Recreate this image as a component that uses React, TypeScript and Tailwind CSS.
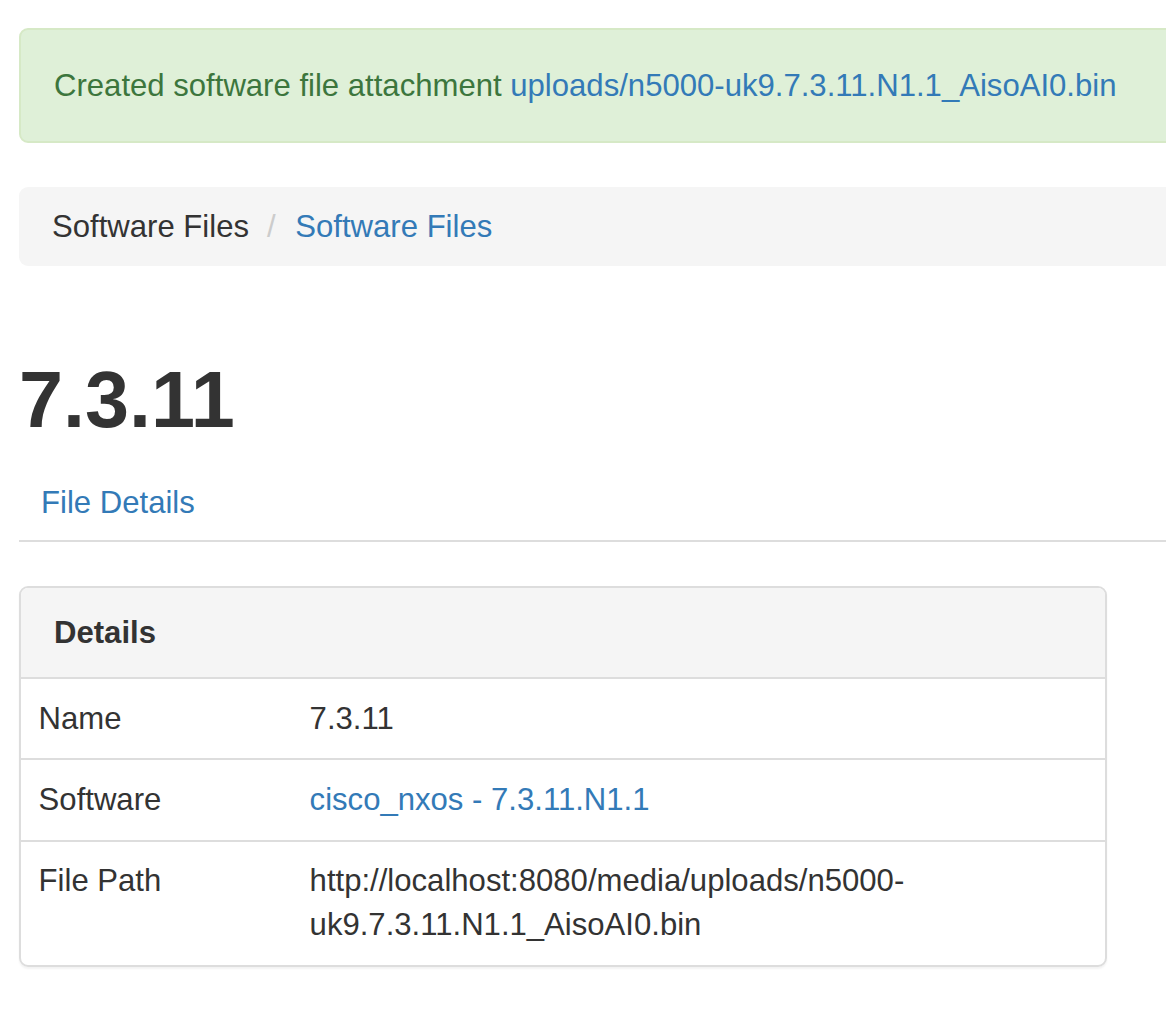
export default function App() {
  const rows: { label: string; value: React.ReactNode }[] = [
    { label: "Name", value: "7.3.11" },
    {
      label: "Software",
      value: (
        <a href="#" className="text-[#337ab7]">
          cisco_nxos - 7.3.11.N1.1
        </a>
      ),
    },
    {
      label: "File Path",
      value: "http://localhost:8080/media/uploads/n5000-uk9.7.3.11.N1.1_AisoAI0.bin",
    },
  ];

  return (
    <div
      className="w-full min-h-[1020px] overflow-hidden bg-white text-[#333333] text-[31.1px] leading-[44px]"
      style={{ fontFamily: '"Liberation Sans", Arial, Helvetica, sans-serif' }}
    >
      <div className="w-[1240px] pl-[19px] pt-[28px]">
        {/* Alert */}
        <div className="border-[2px] border-[#d6e9c6] bg-[#dff0d8] rounded-[9px] px-[33px] pt-[34px] pb-[33px] text-[#3c763d] mb-[44px] whitespace-nowrap">
          Created software file attachment{" "}
          <a href="#" className="text-[#337ab7]">
            uploads/n5000-uk9.7.3.11.N1.1_AisoAI0.bin
          </a>
        </div>

        {/* Breadcrumb */}
        <ol className="flex items-center bg-[#f5f5f5] rounded-[9px] px-[33px] py-[17.6px] whitespace-nowrap">
          <li>Software Files</li>
          <li className="flex">
            <span className="text-[#cccccc] pl-[18px] pr-[11px]">/&nbsp;</span>
            <a href="#" className="text-[#337ab7]">
              Software Files
            </a>
          </li>
        </ol>

        {/* Heading */}
        <h1 className="mt-[90px] mb-[20px] text-[79.2px] leading-[1.1] font-bold">7.3.11</h1>

        {/* Tabs */}
        <ul className="flex border-b-[2px] border-[#dddddd]">
          <li>
            <a href="#" className="block px-[22px] pt-[18px] pb-[15px] text-[#337ab7]">
              File Details
            </a>
          </li>
        </ul>

        {/* Panel */}
        <div className="mt-[44px] w-[1088px] border-[2px] border-[#dddddd] rounded-[9px] overflow-hidden shadow-[0_2px_2px_rgba(0,0,0,0.05)]">
          <div className="bg-[#f5f5f5] border-b-[2px] border-[#dddddd] px-[33px] pt-[23px] pb-[22px] font-bold">
            Details
          </div>
          <table className="w-full table-fixed border-collapse">
            <tbody>
              {rows.map((r, i) => (
                <tr key={r.label} className={i > 0 ? "border-t-[2px] border-[#dddddd]" : ""}>
                  <td className="w-1/4 px-[17.6px] py-[17.6px] align-top">{r.label}</td>
                  <td className="px-[17.6px] py-[17.6px] align-top">{r.value}</td>
                </tr>
              ))}
            </tbody>
          </table>
        </div>
      </div>
    </div>
  );
}
